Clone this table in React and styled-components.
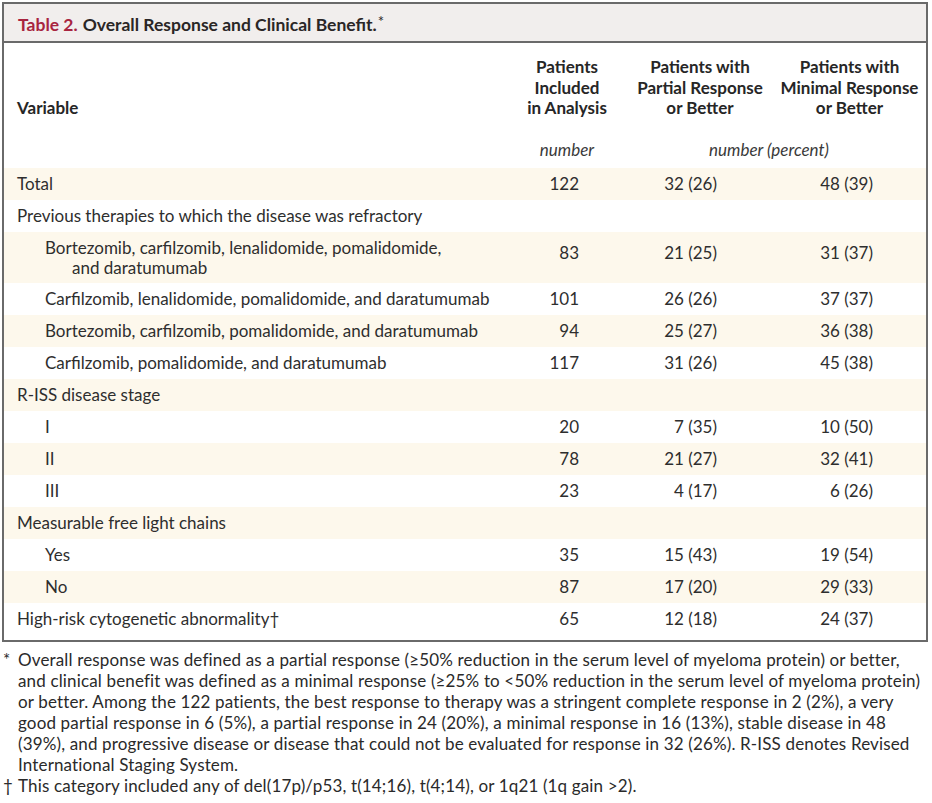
import React from 'react';
import styled, { createGlobalStyle } from 'styled-components';

const GlobalStyle = createGlobalStyle`
	body {
		margin: 0;
		background: #fff;
		font-family: Lato, "Open Sans", sans-serif;
		color: #2a2a2a;
	}
`;

const Page = styled.div`
	width: 932px;
	padding: 2px 4px 0 2px;
	box-sizing: border-box;
`;

const Frame = styled.div`
	border: 2px solid #6a6a6a;
	padding-bottom: 5px;
`;

const TitleBar = styled.div`
	height: 39px;
	display: flex;
	align-items: center;
	padding: 3px 14px 0;
	box-sizing: border-box;
	background: #f1eeed;
	border-bottom: 2px solid #6a6a6a;
	font-size: 17.5px;
	font-weight: 700;
	color: #2a2626;
`;

const TableNo = styled.span`
	color: #a8243f;
	margin-right: 5px;
`;

const Star = styled.span`
	font-size: 15px;
	font-weight: 400;
	position: relative;
	top: -3px;
	margin-left: 1px;
`;

const Grid = styled.div`
	display: grid;
	grid-template-columns: 503px 120px 146px 1fr;
`;

const HeadRow = styled(Grid)`
	padding-top: 14px;
	font-size: 17px;
	font-weight: 700;
	line-height: 20.5px;
	color: #262626;
`;

const HeadCell = styled.div`
	display: flex;
	flex-direction: column;
	justify-content: flex-end;
	text-align: ${p => (p.$left ? 'left' : 'center')};
	padding-left: ${p => (p.$left ? '13px' : '0')};
`;

const UnitRow = styled(Grid)`
	padding: 21px 0 8px;
	font-size: 17px;
	font-style: italic;
	line-height: 20px;
	color: #3a3a3a;
`;

const UnitCell = styled.div`
	grid-column: ${p => p.$span || 'auto'};
	text-align: center;
	padding-right: ${p => p.$pr || 0}px;
`;

const BodyRow = styled(Grid)`
	background: ${p => (p.$band ? '#fdf8ec' : '#fff')};
	font-size: 17px;
	line-height: 20.5px;
	padding: ${p => (p.$tall ? '6px 0 4.5px' : '6px 0 5.5px')};
	color: #2e2e2e;
`;

const Label = styled.div`
	padding-left: ${p => (p.$sub ? 68 : 13)}px;
	text-indent: ${p => (p.$sub ? -27 : 0)}px;
	white-space: nowrap;
`;

const Num = styled.div`
	text-align: right;
	padding-right: ${p => p.$pr}px;
	padding-top: ${p => (p.$tall ? 5 : 0)}px;
`;

const Notes = styled.div`
	padding: 7px 0 0 1px;
	font-size: 17px;
	line-height: 21px;
	letter-spacing: 0.15px;
	color: #2a2a2a;
	white-space: nowrap;
`;

const Note = styled.p`
	margin: 0;
	padding-left: 15px;
	text-indent: -15px;
`;

const Mark = styled.span`
	display: inline-block;
	width: 15px;
	text-indent: 0;
`;

const rows = [
	{ label: 'Total', n: '122', pr: '32 (26)', mr: '48 (39)', band: true },
	{ label: 'Previous therapies to which the disease was refractory' },
	{
		label: (
			<>
				Bortezomib, carfilzomib, lenalidomide, pomalidomide,
				<br />
				and daratumumab
			</>
		),
		id: 'bclpd',
		sub: true,
		tall: true,
		n: '83',
		pr: '21 (25)',
		mr: '31 (37)',
		band: true,
	},
	{ label: 'Carfilzomib, lenalidomide, pomalidomide, and daratumumab', sub: true, n: '101', pr: '26 (26)', mr: '37 (37)' },
	{ label: 'Bortezomib, carfilzomib, pomalidomide, and daratumumab', sub: true, n: '94', pr: '25 (27)', mr: '36 (38)', band: true },
	{ label: 'Carfilzomib, pomalidomide, and daratumumab', sub: true, n: '117', pr: '31 (26)', mr: '45 (38)' },
	{ label: 'R-ISS disease stage', band: true },
	{ label: 'I', sub: true, n: '20', pr: '7 (35)', mr: '10 (50)' },
	{ label: 'II', sub: true, n: '78', pr: '21 (27)', mr: '32 (41)', band: true },
	{ label: 'III', sub: true, n: '23', pr: '4 (17)', mr: '6 (26)' },
	{ label: 'Measurable free light chains', band: true },
	{ label: 'Yes', sub: true, n: '35', pr: '15 (43)', mr: '19 (54)' },
	{ label: 'No', sub: true, n: '87', pr: '17 (20)', mr: '29 (33)', band: true },
	{ label: 'High-risk cytogenetic abnormality\u2020', n: '65', pr: '12 (18)', mr: '24 (37)' },
];

export default function App() {
	return (
		<Page>
			<GlobalStyle />
			<Frame>
				<TitleBar>
					<TableNo>Table 2.</TableNo>
					Overall Response and Clinical Benefit.<Star>*</Star>
				</TitleBar>

				<HeadRow>
					<HeadCell $left>Variable</HeadCell>
					<HeadCell>
						Patients
						<br />
						Included
						<br />
						in Analysis
					</HeadCell>
					<HeadCell>
						Patients with
						<br />
						Partial Response
						<br />
						or Better
					</HeadCell>
					<HeadCell>
						Patients with
						<br />
						Minimal Response
						<br />
						or Better
					</HeadCell>
				</HeadRow>

				<UnitRow>
					<UnitCell $span="2 / 3">number</UnitCell>
					<UnitCell $span="3 / 5" $pr={15}>
						number (percent)
					</UnitCell>
				</UnitRow>

				{rows.map(r => (
					<BodyRow key={r.id || r.label} $band={r.band} $tall={r.tall}>
						<Label $sub={r.sub}>{r.label}</Label>
						<Num $pr={48} $tall={r.tall}>{r.n}</Num>
						<Num $pr={56} $tall={r.tall}>{r.pr}</Num>
						<Num $pr={53} $tall={r.tall}>{r.mr}</Num>
					</BodyRow>
				))}
			</Frame>

			<Notes>
				<Note>
					<Mark>*</Mark>Overall response was defined as a partial response (≥50% reduction in the serum level of
					myeloma protein) or better,
					<br />
					and clinical benefit was defined as a minimal response (≥25% to &lt;50% reduction in the serum level of
					myeloma protein)
					<br />
					or better. Among the 122 patients, the best response to therapy was a stringent complete response in 2
					(2%), a very
					<br />
					good partial response in 6 (5%), a partial response in 24 (20%), a minimal response in 16 (13%), stable
					disease in 48
					<br />
					(39%), and progressive disease or disease that could not be evaluated for response in 32 (26%). R-ISS
					denotes Revised
					<br />
					International Staging System.
				</Note>
				<Note>
					<Mark>†</Mark>This category included any of del(17p)/p53, t(14;16), t(4;14), or 1q21 (1q gain &gt;2).
				</Note>
			</Notes>
		</Page>
	);
}
